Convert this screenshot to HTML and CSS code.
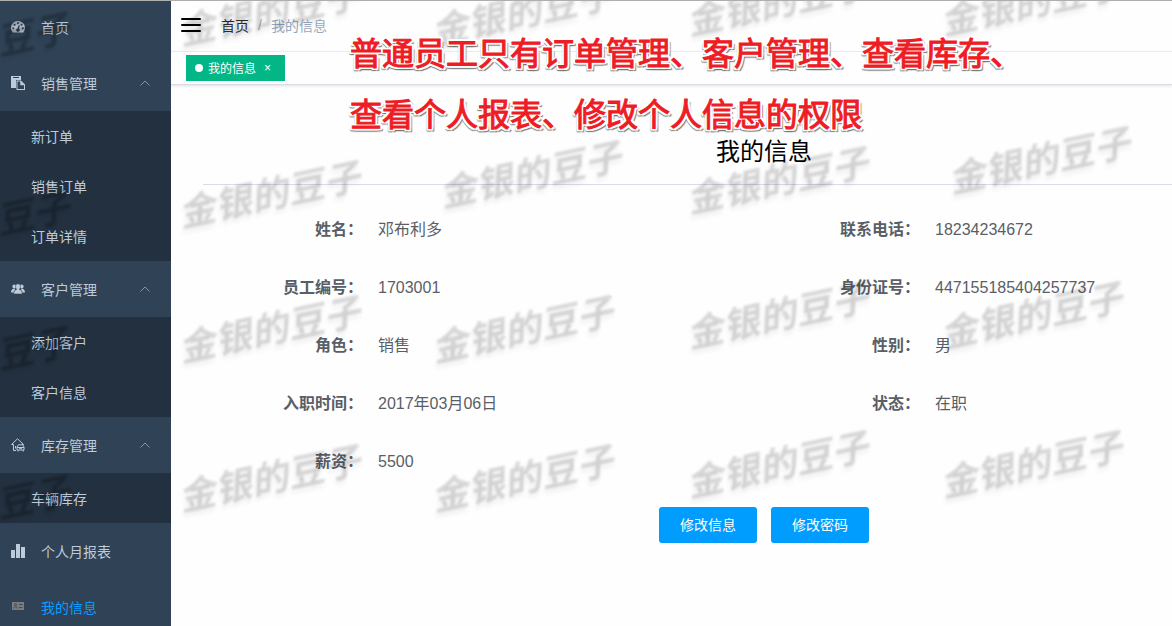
FILE: index.html
```html
<!DOCTYPE html>
<html lang="zh-CN">
<head>
    <meta charset="UTF-8">
    <title>我的信息</title>
    <link rel="stylesheet" href="styles.css">
</head>
<body>
    <div class="app">
        <nav class="sidebar">
            <a class="menu-item" href="#">
                <svg class="icon" viewBox="0 0 14 14"><path fill="currentColor" fill-rule="evenodd" d="M1.7 12.5A7 7 0 1 1 12.3 12.5ZM2.2 7.2a1 1 0 1 0 0 2a1 1 0 0 0 0-2ZM3.6 3.8a1 1 0 1 0 0 2a1 1 0 0 0 0-2ZM7 2.1a1 1 0 1 0 0 2a1 1 0 0 0 0-2ZM10.6 3.8a1 1 0 1 0 0 2a1 1 0 0 0 0-2ZM11.8 7.2a1 1 0 1 0 0 2a1 1 0 0 0 0-2ZM7.7 5L6.5 8.4A1.7 1.7 0 1 0 8 8.7L8.8 5.4Z"/></svg>
                <span>首页</span>
            </a>

            <a class="menu-item" href="#">
                <svg class="icon" viewBox="0 0 14 14"><path fill="currentColor" fill-rule="evenodd" d="M0 0H10V4H5V12H0ZM2 1V2H8V1ZM5.5 4.5H10L14 8.5V14H5.5ZM6.5 5.5V13H13V9.3H9.3V5.5Z"/></svg>
                <span>销售管理</span>
                <svg class="arrow" viewBox="0 0 10 6"><path d="M0.5 5.5L5 1L9.5 5.5"/></svg>
            </a>
            <div class="submenu">
                <a href="#">新订单</a>
                <a href="#">销售订单</a>
                <a href="#">订单详情</a>
            </div>

            <a class="menu-item" href="#">
                <svg class="icon" viewBox="0 0 14 14"><g fill="currentColor"><circle cx="3.4" cy="4.4" r="2"/><circle cx="10.6" cy="4.4" r="2"/><path d="M0 10.5C0 8.2 1.2 6.8 3 6.5L4 7.5L3 10.5ZM14 10.5C14 8.2 12.8 6.8 11 6.5L10 7.5L11 10.5Z"/></g><path fill="currentColor" stroke="#2f4256" stroke-width="0.6" d="M2.6 12C2.6 9 4 8 5.6 7.4C3.8 5 4.4 1.8 7 1.8C9.6 1.8 10.2 5 8.4 7.4C10 8 11.4 9 11.4 12Z"/></svg>
                <span>客户管理</span>
                <svg class="arrow" viewBox="0 0 10 6"><path d="M0.5 5.5L5 1L9.5 5.5"/></svg>
            </a>
            <div class="submenu">
                <a href="#">添加客户</a>
                <a href="#">客户信息</a>
            </div>

            <a class="menu-item" href="#">
                <svg class="icon" viewBox="0 0 14 14"><g fill="none" stroke="currentColor"><path d="M0.5 6.5L6.5 0.8L12.5 6.5H11M0.5 6.5H2.5V12.5H5"/><path d="M6 9L7.3 6.8H11.7L13 9V12H6ZM6 9.5H13M7 12V13.5M12.2 12V13.5M8 10.7H11M4.5 8V10.5"/></g></svg>
                <span>库存管理</span>
                <svg class="arrow" viewBox="0 0 10 6"><path d="M0.5 5.5L5 1L9.5 5.5"/></svg>
            </a>
            <div class="submenu">
                <a href="#">车辆库存</a>
            </div>

            <a class="menu-item" href="#">
                <svg class="icon" viewBox="0 0 14 14"><path fill="currentColor" d="M0 6H4V14H0ZM5 0H9V14H5ZM10 3H14V14H10Z"/></svg>
                <span>个人月报表</span>
            </a>
            <a class="menu-item active" href="#">
                <svg class="icon" viewBox="0 0 14 14"><path fill="#7a7b7e" d="M1 2H13V10H1Z"/><g fill="none" stroke="#3f4c5b"><circle cx="4.5" cy="4.6" r="1"/><path d="M2.5 8.5C2.5 6.2 6.5 6.2 6.5 8.5M8 4.5H11.5M8 7.5H11.5"/></g></svg>
                <span>我的信息</span>
            </a>
        </nav>

        <div class="main">
            <header class="navbar">
                <button class="hamburger" aria-label="菜单">
                    <svg viewBox="0 0 20 16"><path d="M1 2H19M1 8H19M1 14H19"/></svg>
                </button>
                <a class="crumb" href="#">首页</a>
                <span class="separator">/</span>
                <span class="crumb-current">我的信息</span>
            </header>

            <div class="tags">
                <a class="tag" href="#"><span class="dot"></span>我的信息<span class="close">×</span></a>
            </div>

            <main class="content">
                <h1>我的信息</h1>
                <dl class="info">
                    <div class="field"><dt>姓名：</dt><dd>邓布利多</dd></div>
                    <div class="field"><dt>联系电话：</dt><dd>18234234672</dd></div>
                    <div class="field"><dt>员工编号：</dt><dd>1703001</dd></div>
                    <div class="field"><dt>身份证号：</dt><dd>447155185404257737</dd></div>
                    <div class="field"><dt>角色：</dt><dd>销售</dd></div>
                    <div class="field"><dt>性别：</dt><dd>男</dd></div>
                    <div class="field"><dt>入职时间：</dt><dd>2017年03月06日</dd></div>
                    <div class="field"><dt>状态：</dt><dd>在职</dd></div>
                    <div class="field"><dt>薪资：</dt><dd>5500</dd></div>
                </dl>
                <div class="actions">
                    <button class="btn">修改信息</button>
                    <button class="btn">修改密码</button>
                </div>
            </main>
        </div>
    </div>

    <div class="watermarks">
        <span>金银的豆子</span>
        <span>金银的豆子</span>
        <span>金银的豆子</span>
        <span>金银的豆子</span>
        <span>金银的豆子</span>
        <span>金银的豆子</span>
        <span>金银的豆子</span>
        <span>金银的豆子</span>
        <span>金银的豆子</span>
        <span>金银的豆子</span>
        <span>金银的豆子</span>
        <span>金银的豆子</span>
        <span>金银的豆子</span>
        <span>金银的豆子</span>
        <span>金银的豆子</span>
        <span>金银的豆子</span>
    </div>
    <div class="watermarks side">
        <span>豆子</span>
        <span>豆子</span>
        <span>豆子</span>
        <span>豆子</span>
    </div>

    <p class="note">普通员工只有订单管理、客户管理、查看库存、<br>查看个人报表、修改个人信息的权限</p>
</body>
</html>
```

FILE: styles.css
```css
* {
    box-sizing: border-box;
}

body {
    position: relative;
    margin: 0;
    height: 100vh;
    overflow: hidden;
    background: #fefefe;
    color: #5a5e66;
    font-family: "Liberation Sans", "Noto Sans CJK SC", sans-serif;
    font-size: 14px;
}

/* window edge */
body::before {
    content: "";
    position: absolute;
    z-index: 2;
    top: 0;
    left: 0;
    right: 0;
    height: 1px;
    background: #aeaeae;
}

a {
    color: inherit;
    text-decoration: none;
}

.app {
    display: flex;
    height: 100%;
    overflow: hidden;
}

/* sidebar */
.sidebar {
    flex: 0 0 171px;
    margin-top: -1px;
    background: #2f4256;
    color: #bfcbd9;
}

.menu-item {
    display: flex;
    align-items: center;
    height: 56px;
    padding: 0 21px 0 11px;
}

.menu-item.active {
    color: #0a9dff;
}

.icon {
    width: 14px;
    height: 14px;
    margin-right: 16px;
}

.arrow {
    width: 10px;
    height: 6px;
    margin-left: auto;
    fill: none;
    stroke: #8793a0;
}

.submenu {
    background: #22303f;
}

.submenu a {
    display: block;
    height: 50px;
    padding-left: 31px;
    line-height: 52px;
}

/* header */
.main {
    flex: 1;
    min-width: 0;
    overflow: hidden;
}

.navbar {
    display: flex;
    align-items: center;
    height: 52px;
    padding: 0 0 2px 10px;
    border-bottom: 1px solid #f0f0f0;
}

.hamburger {
    width: 20px;
    height: 16px;
    margin-right: 20px;
    padding: 0;
    border: none;
    background: none;
}

.hamburger svg {
    display: block;
    stroke: #000;
    stroke-width: 2;
    stroke-linecap: round;
}

.crumb {
    color: #2d2f33;
}

.separator {
    width: 22px;
    text-align: center;
    color: #a9b4c2;
}

.crumb-current {
    color: #97a8be;
}

.tags {
    display: flex;
    align-items: center;
    height: 33px;
    padding: 0 15px 1px;
    border-bottom: 1px solid #d8dce5;
    box-shadow: 0 1px 3px rgba(0,0,0,0.12);
}

.tag {
    display: flex;
    align-items: center;
    height: 26px;
    padding: 0 14px 0 9px;
    background: #02b785;
    color: white;
    font-size: 12px;
}

.dot {
    width: 8px;
    height: 8px;
    margin-right: 5px;
    border-radius: 50%;
    background: white;
}

.close {
    margin-left: 8px;
}

/* the form is wider than the window and runs off to the right */
.content {
    margin-right: -153px;
    padding: 49px 0 0 32px;
}

h1 {
    margin: 0;
    padding-bottom: 14px;
    border-bottom: 1px solid #d9dbe8;
    color: #000;
    font-size: 24px;
    font-weight: normal;
    line-height: 36px;
    text-align: center;
}

.info {
    display: grid;
    grid-template-columns: 1fr 1fr;
    margin: 16px 8px 16px 0;
    font-size: 16px;
}

.field {
    display: flex;
    height: 58px;
    line-height: 58px;
}

dt {
    width: 160px;
    text-align: right;
    font-weight: bold;
}

dd {
    margin: 0 0 0 15px;
}

.actions {
    display: flex;
    justify-content: center;
    gap: 14px;
}

.btn {
    height: 36px;
    padding: 0 21px 2px;
    border: none;
    border-radius: 3px;
    background: #009dff;
    color: white;
    font-family: inherit;
    font-size: 14px;
}

/* watermarks */
.watermarks {
    position: absolute;
    top: 0;
    right: 0;
    bottom: 0;
    left: 171px;
    overflow: hidden;
    pointer-events: none;
    color: rgba(0,0,0,0.14);
    font-size: 37px;
    font-style: italic;
    font-weight: bold;
    line-height: 56px;
    text-shadow: -2px 4px 5px rgba(0,0,0,0.06);
}

.watermarks span {
    position: absolute;
    white-space: nowrap;
    transform: rotate(-12deg);
    filter: blur(1px);
}

.watermarks span:nth-child(4n+1) { left: 6px; }
.watermarks span:nth-child(4n+2) { left: 259px; }
.watermarks span:nth-child(4n+3) { left: 514px; }
.watermarks span:nth-child(4n+4) { left: 768px; }
.watermarks span:nth-child(-n+16) { top: 452px; }
.watermarks span:nth-child(-n+12) { top: 303px; }
.watermarks span:nth-child(-n+8) { top: 168px; }
.watermarks span:nth-child(-n+4) { top: -14px; }
.watermarks span:nth-child(3), .watermarks span:nth-child(4) { top: -24px; }
.watermarks span:nth-child(6) { left: 267px; top: 148px; }
.watermarks span:nth-child(7) { top: 154px; }
.watermarks span:nth-child(8) { left: 776px; top: 134px; }
.watermarks span:nth-child(11), .watermarks span:nth-child(12) { top: 289px; }
.watermarks span:nth-child(15), .watermarks span:nth-child(16) { top: 438px; }

.watermarks.side {
    left: 0;
    right: auto;
    width: 171px;
    color: rgba(0,0,0,0.24);
}

.watermarks.side span:nth-child(n) { left: -4px; }
.watermarks.side span:nth-child(1) { top: 8px; }
.watermarks.side span:nth-child(2) { top: 187px; }
.watermarks.side span:nth-child(3) { top: 322px; }
.watermarks.side span:nth-child(4) { top: 471px; }

/* red note over the page */
.note {
    position: absolute;
    top: 24px;
    left: 350px;
    margin: 0;
    color: #ee1c25;
    font-size: 32px;
    line-height: 61px;
    white-space: nowrap;
    -webkit-text-stroke: 1px #ee1c25;
    text-shadow:
        -2px 0 0 white, 2px 0 0 white, 0 -2px 0 white, 0 2px 0 white,
        -2px -2px 0 white, 2px -2px 0 white, -2px 2px 0 white, 2px 2px 0 white,
        -2px 3px 1px #777, 3px 3px 1px #777, 0 3px 1px #777;
}
```
